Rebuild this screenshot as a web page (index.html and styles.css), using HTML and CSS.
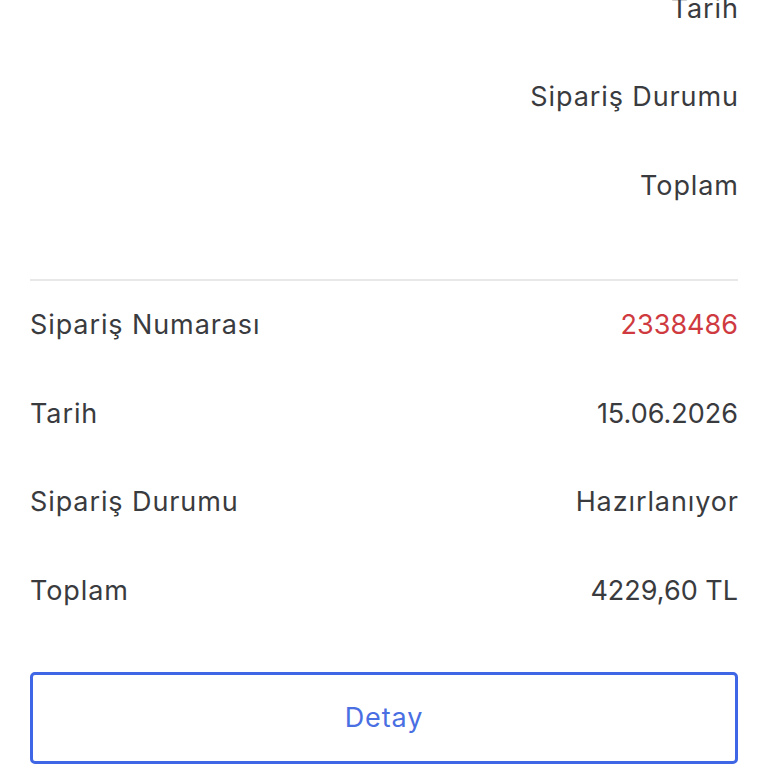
FILE: index.html
```html
<!DOCTYPE html>
<html>
<head>
    <title>Siparişlerim</title>
    <meta charset="UTF-8">
    <link rel="stylesheet" href="styles.css">
</head>
<body>
    <div class="container">
        <div class="order order-prev">
            <div class="row"><span class="label"></span><span class="value">Tarih</span></div>
            <div class="row"><span class="label"></span><span class="value">Sipariş Durumu</span></div>
            <div class="row"><span class="label"></span><span class="value">Toplam</span></div>
        </div>
        <div class="order">
            <div class="row"><span class="label">Sipariş Numarası</span><span class="value num red">2338486</span></div>
            <div class="row"><span class="label">Tarih</span><span class="value num">15.06.2026</span></div>
            <div class="row"><span class="label">Sipariş Durumu</span><span class="value">Hazırlanıyor</span></div>
            <div class="row"><span class="label">Toplam</span><span class="value num">4229,60 TL</span></div>
            <button class="detail-btn">Detay</button>
        </div>
    </div>
</body>
</html>
```

FILE: styles.css
```css
body { margin: 0; background: #fff; font-family: Inter, "Noto Sans", sans-serif; color: #3a3b3e; }
.container { padding: 0 30px; margin-top: -36px; }
.order-prev { padding-bottom: 49px; border-bottom: 2px solid #e8e8e8; }
.row { display: flex; justify-content: space-between; align-items: center; height: 88.5px; font-size: 27px; letter-spacing: 0.9px; }
.value { margin-right: -0.9px; }
.num { letter-spacing: 0; margin-right: 0; }
.red { color: #cf3a40; }
.detail-btn { display: block; width: 100%; height: 92px; margin-top: 37px; background: #fff; border: 3px solid #3f66e4; border-radius: 5px; color: #4a6fe3; font-family: Inter, "Noto Sans", sans-serif; font-size: 27px; letter-spacing: 0.9px; cursor: pointer; }
```
